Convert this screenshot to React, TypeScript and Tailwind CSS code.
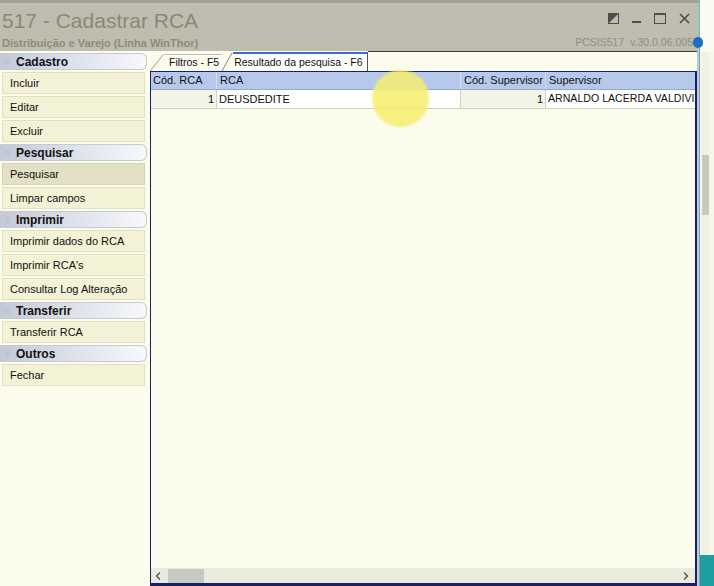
import { ChevronsDown, ChevronLeft, ChevronRight } from "lucide-react";

type Group = { title: string; items: string[] };

const groups: Group[] = [
  { title: "Cadastro", items: ["Incluir", "Editar", "Excluir"] },
  { title: "Pesquisar", items: ["Pesquisar", "Limpar campos"] },
  { title: "Imprimir", items: ["Imprimir dados do RCA", "Imprimir RCA's", "Consultar Log Alteração"] },
  { title: "Transferir", items: ["Transferir RCA"] },
  { title: "Outros", items: ["Fechar"] },
];

function WindowControls() {
  return (
    <div className="flex items-center gap-[13px] text-[#4d4d4d]">
      <svg width="11" height="11" viewBox="0 0 11 11">
        <rect x="0.5" y="0.5" width="10" height="10" fill="none" stroke="currentColor" />
        <polygon points="0,0 11,0 0,11" fill="currentColor" />
      </svg>
      <svg width="9" height="11" viewBox="0 0 9 11">
        <rect x="0" y="8" width="9" height="2" fill="currentColor" />
      </svg>
      <svg width="12" height="11" viewBox="0 0 12 11">
        <rect x="0.5" y="0.5" width="11" height="10" fill="none" stroke="currentColor" />
        <rect x="0" y="0" width="12" height="2" fill="currentColor" />
      </svg>
      <svg width="11" height="11" viewBox="0 0 11 11">
        <path d="M1 1 L10 10 M10 1 L1 10" stroke="currentColor" strokeWidth="1.6" />
      </svg>
    </div>
  );
}

function Sidebar() {
  return (
    <div className="w-[150px] pt-[2px] flex flex-col">
      {groups.map((g) => (
        <div key={g.title} className="flex flex-col">
          <div className="w-[147px] h-[17px] mb-[2px] flex items-center gap-[3px] pl-[2px] rounded-r-[6px] border border-l-0 border-[#c4cad8] bg-gradient-to-r from-[#c3c9d7] via-[#dde1ea] to-[#f7f8fb]">
            <ChevronsDown size={11} strokeWidth={1.5} className="text-[#a3acbf]" />
            <span className="text-[12px] font-bold text-[#111]">{g.title}</span>
          </div>
          {g.items.map((it) => (
            <div
              key={it}
              className={
                it === "Pesquisar"
                  ? "ml-[2px] w-[143px] h-[22px] mb-[2px] flex items-center pl-[7px] border border-[#d6d2b4] bg-[#e4e0c6] text-[11px] text-[#111]"
                  : "ml-[2px] w-[143px] h-[22px] mb-[2px] flex items-center pl-[7px] border border-[#e2dfc2] bg-[#f4f2d6] text-[11px] text-[#111]"
              }
            >
              {it}
            </div>
          ))}
        </div>
      ))}
    </div>
  );
}

function Tabs() {
  return (
    <div className="h-[20px] flex items-end">
      <div className="flex items-end h-[17px]">
        <svg width="14" height="17" viewBox="0 0 14 17" className="text-[#9a9a9a]">
          <path d="M0 17 L13 1" stroke="currentColor" strokeWidth="1" fill="none" />
        </svg>
        <div className="h-[17px] pl-[5px] pr-[3px] flex items-center border-t border-[#bdbdbd] text-[10.5px] text-[#111] bg-[#fbfbef]">
          Filtros - F5
        </div>
      </div>
      <div className="flex items-end h-[19px]">
        <svg width="11" height="19" viewBox="0 0 11 19">
          <path d="M0 19 L10 1" stroke="#8a8a8a" strokeWidth="1" fill="none" />
        </svg>
        <div className="h-[19px] pl-[1px] pr-[4px] flex items-center border-t-2 border-t-[#3d6dc4] border-r border-r-[#555] bg-white text-[10.5px] text-[#111]">
          Resultado da pesquisa - F6
        </div>
      </div>
      <div className="flex-1 h-[20px] border-t border-[#3b3b3b]" />
    </div>
  );
}

function Grid() {
  return (
    <div className="flex-1 flex flex-col border-l border-t border-r-2 border-b-[3px] border-[#172068] bg-[#fcfcec]">
      <div className="h-[18px] flex bg-[#b6c9ec] border-b border-[#93a8d2] text-[11px] text-[#111]">
        <div className="w-[66px] pl-[2px] flex items-center border-r border-[#d4dcec]">Cód. RCA</div>
        <div className="w-[244px] pl-[3px] flex items-center border-r border-[#d4dcec]">RCA</div>
        <div className="w-[85px] pl-[3px] flex items-center border-r border-[#d4dcec]">Cód. Supervisor</div>
        <div className="flex-1 pl-[3px] flex items-center whitespace-nowrap overflow-hidden">Supervisor</div>
      </div>
      <div className="h-[19px] flex border-b border-[#cfcfc4] text-[11px] text-[#111]">
        <div className="w-[66px] pr-[2px] flex items-center justify-end border-r border-[#cfcfc4] bg-[#f3f3e6]">1</div>
        <div className="w-[244px] pl-[2px] flex items-center border-r border-[#cfcfc4] bg-white">DEUSDEDITE</div>
        <div className="w-[85px] pr-[2px] flex items-center justify-end border-r border-[#cfcfc4] bg-[#f3f3e6]">1</div>
        <div className="flex-1 pl-[2px] flex items-center whitespace-nowrap overflow-hidden bg-white text-[10.6px]">ARNALDO LACERDA VALDIVINO</div>
      </div>
      <div className="flex-1" />
      <div className="h-[15px] flex items-center bg-[#ebebdd]">
        <ChevronLeft size={12} strokeWidth={3} className="ml-[1px] text-[#555]" />
        <div className="ml-[4px] w-[36px] h-[14px] bg-[#c9c9c3]" />
        <div className="flex-1" />
        <ChevronRight size={12} strokeWidth={3} className="mr-[3px] text-[#555]" />
      </div>
    </div>
  );
}

export default function App() {
  return (
    <div className="relative w-[714px] h-[586px] flex overflow-hidden bg-[#fcfcec] font-['Liberation_Sans',Arial,sans-serif]">
      <div className="w-[700px] flex flex-col">
        <div className="h-[51px] flex justify-between border-t-[3px] border-t-[#a3a296] border-r border-r-[#4fc3cf] bg-[#bebdb0]">
          <div className="pl-[2px] pt-[6px] flex flex-col">
            <div className="text-[21px] leading-[24px] text-[#8a8973]">517 - Cadastrar RCA</div>
            <div className="mt-[4px] text-[11px] leading-[13px] font-bold text-[#8d8c77]">
              Distribuição e Varejo (Linha WinThor)
            </div>
          </div>
          <div className="pr-[9px] pt-[10px] flex flex-col items-end">
            <WindowControls />
            <div className="mt-[12px] mr-[-3px] text-[10.5px] leading-[13px] text-[#8e8d80] whitespace-pre">
              PCSIS517  v.30.0.06.005
            </div>
          </div>
        </div>
        <div className="flex-1 flex">
          <Sidebar />
          <div className="w-[547px] flex flex-col">
            <Tabs />
            <Grid />
          </div>
          <div className="w-[3px] flex">
            <div className="w-[2px] bg-[#a9d2ea]" />
            <div className="w-[1px] bg-[#9a9a92]" />
          </div>
        </div>
      </div>
      <div className="w-[14px] flex flex-col bg-[#f7f7e9]">
        <div className="h-[52px] bg-[#fafaf3]" />
        <div className="flex-1 flex pl-[2px]">
          <div className="w-[7px] flex flex-col bg-[#f0f0e4]">
            <div className="h-[103px]" />
            <div className="h-[60px] bg-[#c9c9c1]" />
          </div>
        </div>
        <div className="h-[31px] bg-[#1f9ea2]" />
      </div>
      <div className="absolute left-[693px] top-[37px] w-[10px] h-[11px] rounded-full bg-[#1d6fc4]" />
      <div className="absolute left-[372px] top-[70px] w-[57px] h-[57px] rounded-full bg-[#f5ee6c]/85 blur-[1px]" />
    </div>
  );
}
